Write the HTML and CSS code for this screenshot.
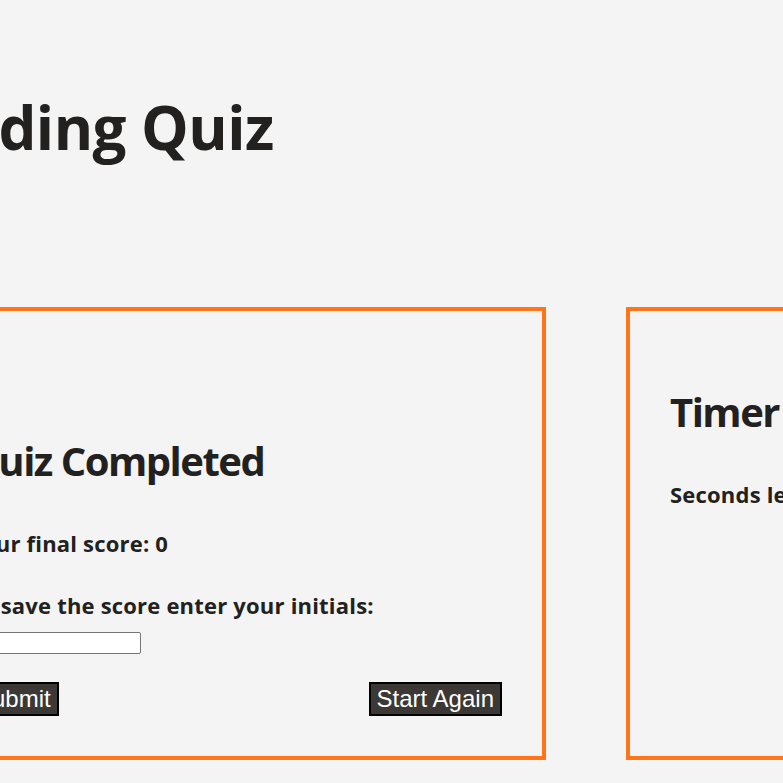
FILE: index.html
```html
<!DOCTYPE html>
<html lang="en">
<head>
<meta charset="utf-8">
<title>Coding Quiz</title>
<link rel="stylesheet" href="styles.css">
</head>
<body>
<div class="page">
  <header class="header">
    <h1 class="title">Coding Quiz</h1>
  </header>
  <main class="cards">
    <section class="card card-main">
      <div class="done">
        <h2 class="card-title">Quiz Completed</h2>
        <p class="text score">Your final score: 0</p>
        <p class="text prompt">To save the score enter your initials:</p>
        <input class="initials" type="text">
        <div class="actions">
          <button class="btn" type="button">Submit</button>
          <button class="btn" type="button">Start Again</button>
        </div>
      </div>
    </section>
    <aside class="card card-timer">
      <h2 class="card-title">Timer</h2>
      <p class="text">Seconds left: 0</p>
    </aside>
  </main>
</div>
</body>
</html>
```
FILE: styles.css
```css
html, body {
  margin: 0;
  padding: 0;
  overflow: hidden;
}
body {
  background: #f4f4f4;
  color: #222120;
  font-family: "Trebuchet MS", "Open Sans", sans-serif;
  display: flex;
  justify-content: center;
  min-height: 783px;
}
.page {
  flex: 0 0 935px;
  width: 935px;
}
.header {
  padding-top: 92px;
}
.title {
  margin: 0;
  font-size: 60px;
  font-weight: 700;
  line-height: 70px;
  letter-spacing: -0.5px;
}
.cards {
  display: flex;
  gap: 80px;
  margin-top: 145px;
}
.card {
  border: 4px solid #ff7518;
  padding: 40px;
}
.card-main {
  flex: 0 0 534px;
}
.card-timer {
  flex: 1;
  min-width: 0;
}
.done {
  margin-top: 49px;
  display: flex;
  flex-direction: column;
}
.card-title {
  margin: 38px 0 0;
  font-size: 40px;
  font-weight: 700;
  line-height: 46px;
  letter-spacing: -1.5px;
}
.text {
  margin: 46px 0 0;
  font-size: 22px;
  font-weight: 700;
  line-height: 26px;
  letter-spacing: 0.2px;
  white-space: nowrap;
}
.prompt {
  margin-top: 36px;
}
.initials {
  align-self: flex-start;
  margin-top: 14px;
  width: 173px;
  height: 22px;
  box-sizing: border-box;
  border: 1px solid #767676;
  border-radius: 2px;
  background: #fff;
  padding: 1px 2px;
  font: 13px "Liberation Sans", Arial, sans-serif;
}
.actions {
  display: flex;
  justify-content: space-between;
  margin-top: 28px;
}
.btn {
  font-family: "Liberation Sans", Arial, sans-serif;
  font-size: 24px;
  line-height: 28px;
  padding: 1px 6px;
  color: #fff;
  background: #3b3836;
  border: 2px solid #000;
  border-radius: 0;
}
```
